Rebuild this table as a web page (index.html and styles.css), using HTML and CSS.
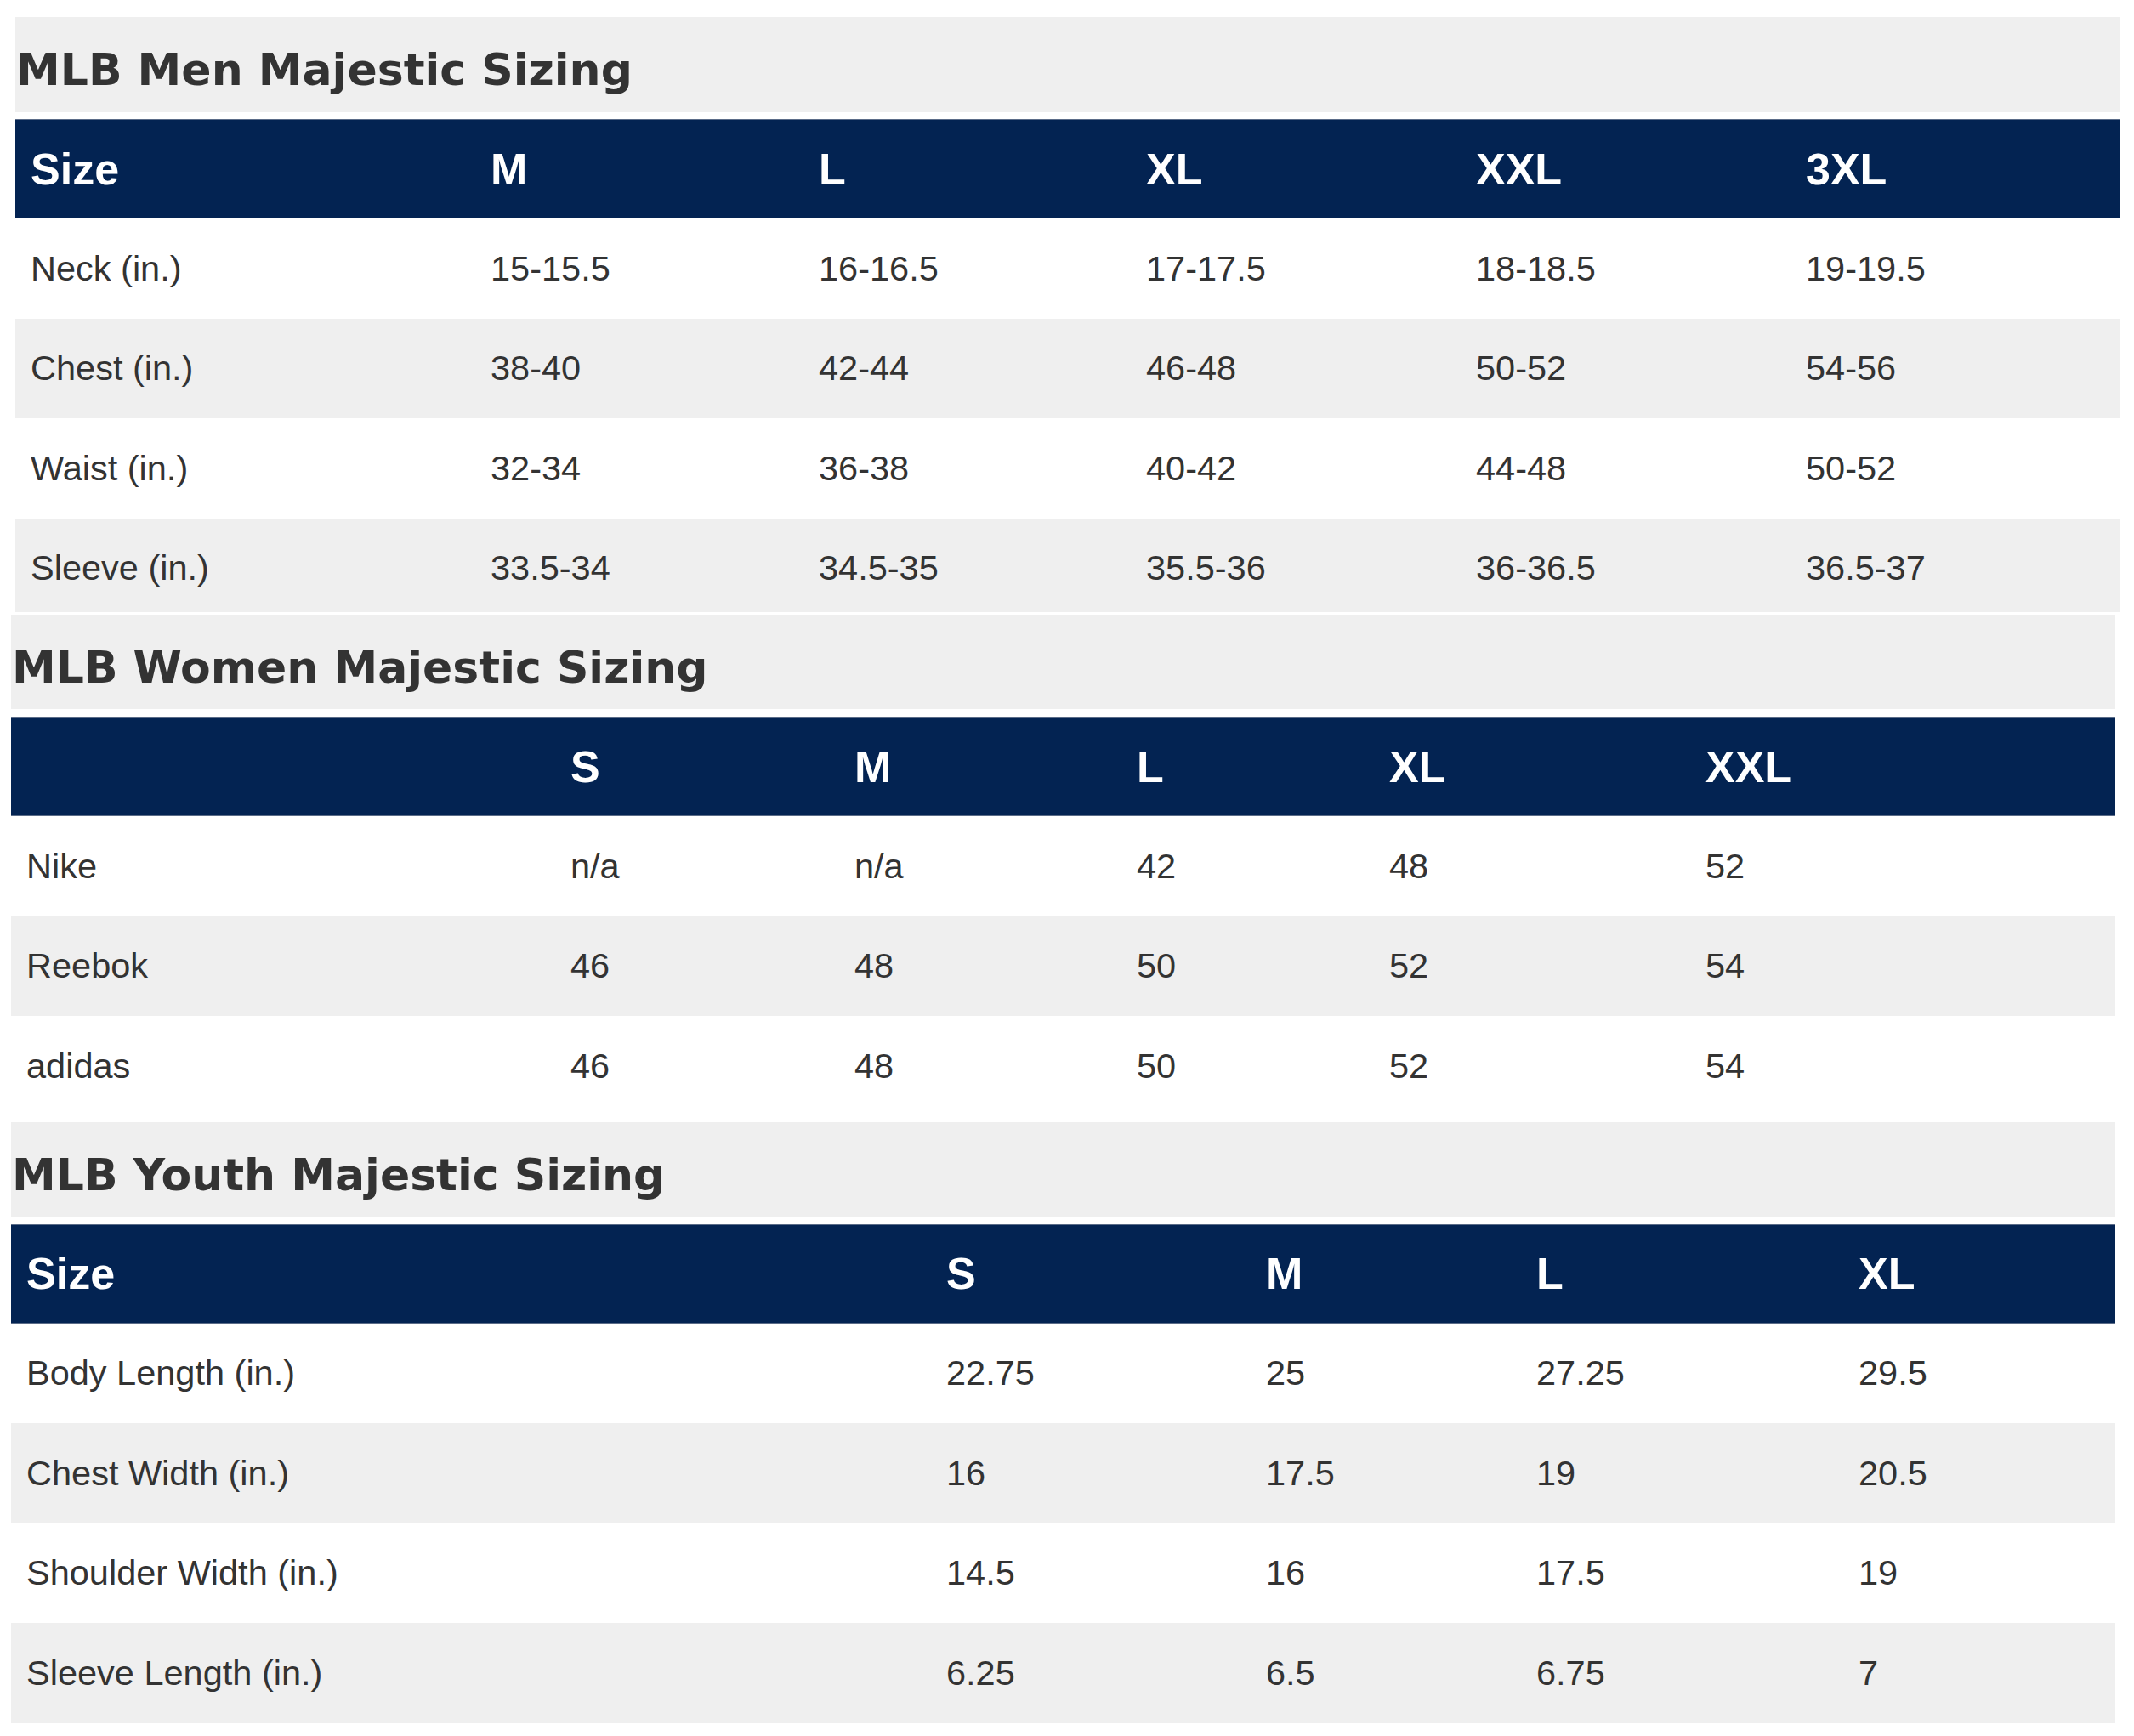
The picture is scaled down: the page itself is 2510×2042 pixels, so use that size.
FILE: index.html
```html
<!DOCTYPE html>
<html lang="en">
<head>
<meta charset="utf-8">
<title>MLB Majestic Sizing</title>
<link rel="stylesheet" href="styles.css">
</head>
<body>
<section class="chart chart-men">
  <h2 class="chart-title">MLB Men Majestic Sizing</h2>
  <div class="grid cols-men">
    <div class="row head"><div class="cell">Size</div><div class="cell">M</div><div class="cell">L</div><div class="cell">XL</div><div class="cell">XXL</div><div class="cell">3XL</div></div>
    <div class="row"><div class="cell">Neck (in.)</div><div class="cell">15-15.5</div><div class="cell">16-16.5</div><div class="cell">17-17.5</div><div class="cell">18-18.5</div><div class="cell">19-19.5</div></div>
    <div class="row alt"><div class="cell">Chest (in.)</div><div class="cell">38-40</div><div class="cell">42-44</div><div class="cell">46-48</div><div class="cell">50-52</div><div class="cell">54-56</div></div>
    <div class="row"><div class="cell">Waist (in.)</div><div class="cell">32-34</div><div class="cell">36-38</div><div class="cell">40-42</div><div class="cell">44-48</div><div class="cell">50-52</div></div>
    <div class="row alt"><div class="cell">Sleeve (in.)</div><div class="cell">33.5-34</div><div class="cell">34.5-35</div><div class="cell">35.5-36</div><div class="cell">36-36.5</div><div class="cell">36.5-37</div></div>
  </div>
</section>

<section class="chart chart-women">
  <h2 class="chart-title">MLB Women Majestic Sizing</h2>
  <div class="grid cols-women">
    <div class="row head"><div class="cell"></div><div class="cell">S</div><div class="cell">M</div><div class="cell">L</div><div class="cell">XL</div><div class="cell">XXL</div></div>
    <div class="row"><div class="cell">Nike</div><div class="cell">n/a</div><div class="cell">n/a</div><div class="cell">42</div><div class="cell">48</div><div class="cell">52</div></div>
    <div class="row alt"><div class="cell">Reebok</div><div class="cell">46</div><div class="cell">48</div><div class="cell">50</div><div class="cell">52</div><div class="cell">54</div></div>
    <div class="row"><div class="cell">adidas</div><div class="cell">46</div><div class="cell">48</div><div class="cell">50</div><div class="cell">52</div><div class="cell">54</div></div>
  </div>
</section>

<section class="chart chart-youth">
  <h2 class="chart-title">MLB Youth Majestic Sizing</h2>
  <div class="grid cols-youth">
    <div class="row head"><div class="cell">Size</div><div class="cell">S</div><div class="cell">M</div><div class="cell">L</div><div class="cell">XL</div></div>
    <div class="row"><div class="cell">Body Length (in.)</div><div class="cell">22.75</div><div class="cell">25</div><div class="cell">27.25</div><div class="cell">29.5</div></div>
    <div class="row alt"><div class="cell">Chest Width (in.)</div><div class="cell">16</div><div class="cell">17.5</div><div class="cell">19</div><div class="cell">20.5</div></div>
    <div class="row"><div class="cell">Shoulder Width (in.)</div><div class="cell">14.5</div><div class="cell">16</div><div class="cell">17.5</div><div class="cell">19</div></div>
    <div class="row alt"><div class="cell">Sleeve Length (in.)</div><div class="cell">6.25</div><div class="cell">6.5</div><div class="cell">6.75</div><div class="cell">7</div></div>
  </div>
</section>
</body>
</html>
```

FILE: styles.css
```css
html, body {
  margin: 0;
  padding: 0;
  background: #ffffff;
}

body {
  font-family: "Liberation Sans", Arial, sans-serif;
  color: #333333;
}

.chart {
  width: 2475px;
}

.chart-men {
  margin: 20px 0 0 18px;
  height: 700px;
  overflow: hidden;
}

.chart-women {
  margin: 3px 0 0 13px;
}

.chart-youth {
  margin: 7px 0 0 13px;
}

.chart-title {
  margin: 0;
  height: 112px;
  box-sizing: border-box;
  padding: 36px 0 0 1px;
  background: #efefef;
  font-family: "DejaVu Sans", Verdana, sans-serif;
  font-weight: bold;
  font-size: 52px;
  line-height: 53px;
  color: #333333;
  white-space: nowrap;
}

.chart-women .chart-title {
  height: 111px;
}

.grid {
  margin-top: 8px;
  display: flex;
  flex-direction: column;
}

.chart-women .grid {
  margin-top: 9px;
}

.row {
  display: grid;
  flex: none;
  height: 117.5px;
  background: #ffffff;
}

.row.alt {
  background: #efefef;
}

.row.head {
  height: 117px;
  background: #032352;
  box-shadow: inset 0 1px 0 #5b6c88, inset 0 -1px 0 #5b6c88;
}

.cols-men .row {
  grid-template-columns: 541px 386px 385px 388px 388px 387px;
}

.cols-women .row {
  grid-template-columns: 640px 334px 332px 297px 372px 500px;
}

.cols-youth .row {
  grid-template-columns: 1082px 376px 318px 379px 320px;
}

.cell {
  display: flex;
  align-items: center;
  padding-left: 18px;
  font-size: 41.5px;
  color: #333333;
  white-space: nowrap;
}

.head .cell {
  font-weight: bold;
  font-size: 52px;
  color: #ffffff;
}
```
